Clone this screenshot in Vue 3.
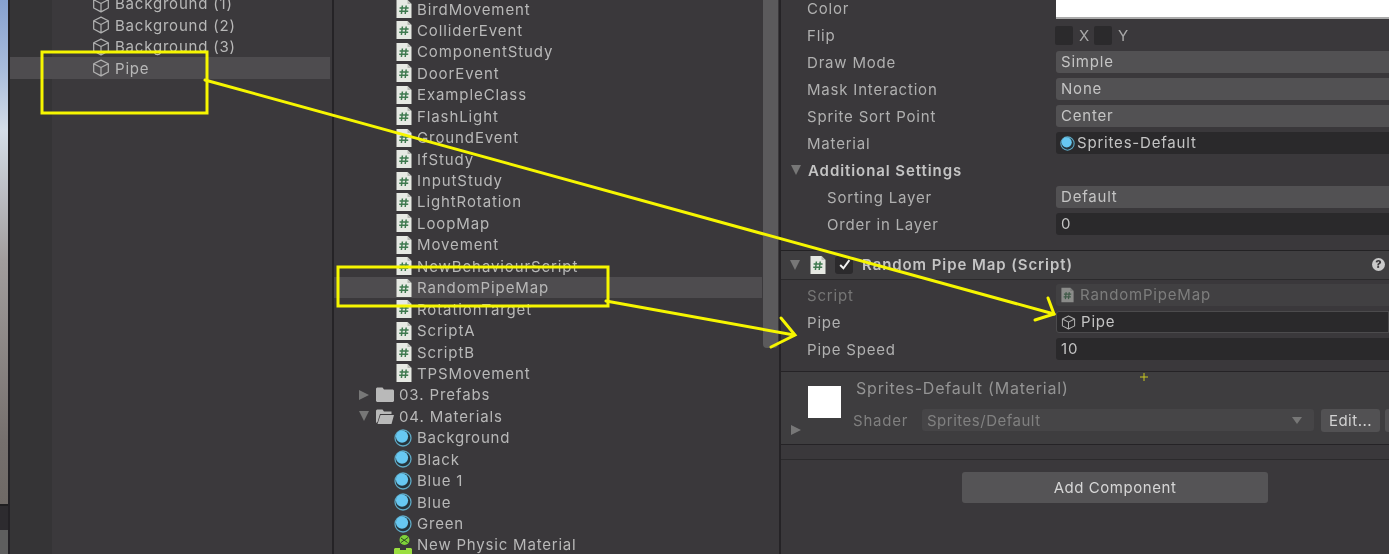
<script setup>
const hierarchy = ['Background (1)', 'Background (2)', 'Background (3)', 'Pipe']
const project = [
  ...['BirdMovement','ColliderEvent','ComponentStudy','DoorEvent','ExampleClass','FlashLight','GroundEvent','IfStudy','InputStudy','LightRotation','LoopMap','Movement','NewBehaviourScript','RandomPipeMap','RotationTarget','ScriptA','ScriptB','TPSMovement'].map(name => ({ name, kind: 'script' })),
  { name: '03. Prefabs', kind: 'closed' },
  { name: '04. Materials', kind: 'open' },
  ...['Background','Black','Blue 1','Blue','Green'].map(name => ({ name, kind: 'mat' })),
  { name: 'New Physic Material', kind: 'physic' }
]
const topRows = [
  { label: 'Draw Mode', value: 'Simple' },
  { label: 'Mask Interaction', value: 'None' },
  { label: 'Sprite Sort Point', value: 'Center' }
]
</script>

<template>
  <div class="app">
    <svg class="defs" width="0" height="0" aria-hidden="true">
      <symbol id="cube" viewBox="0 0 16 16">
        <path d="M8 1 14.5 4.2V11.6L8 15 1.5 11.6V4.2ZM1.5 4.2 8 7.6 14.5 4.2M8 7.6V15" fill="none" stroke="#b0b0b0" stroke-width="1.1" stroke-linejoin="round"/>
      </symbol>
      <symbol id="script" viewBox="0 0 16 18">
        <path d="M.5 0H11.5L15.5 4V18H.5Z" fill="#e6e9e3"/>
        <path d="M11.5 0 15.5 4H11.5Z" fill="#b9bcb6"/>
        <path d="M6.4 5.5 5.4 14M10.2 5.5 9.2 14M3.6 8H12.6M3.2 11.2H12.2" fill="none" stroke="#3f7a50" stroke-width="1.5"/>
      </symbol>
      <symbol id="material" viewBox="0 0 18 18">
        <circle cx="9" cy="9" r="8" fill="#26343b" stroke="#5fa9c4" stroke-width="1.3"/>
        <circle cx="8" cy="7.6" r="6.1" fill="#67c8f2"/>
      </symbol>
    </svg>

    <aside class="scene">
      <div class="scene-sky"></div>
      <div class="scene-bar"></div>
      <div class="scene-foot"></div>
    </aside>

    <section class="hierarchy">
      <div class="h-list">
        <div v-for="item in hierarchy" :key="item" class="row h-row" :class="{ selected: item === 'Pipe' }">
          <svg class="i-cube"><use href="#cube"/></svg>
          <span>{{ item }}</span>
        </div>
      </div>
    </section>

    <section class="project">
      <div class="p-list">
        <div v-for="item in project" :key="item.name" class="row p-row" :class="['k-' + item.kind, { selected: item.name === 'RandomPipeMap' }]">
          <template v-if="item.kind === 'closed' || item.kind === 'open'">
            <i class="fold" :class="item.kind === 'open' ? 'tri-down' : 'tri-right'"></i>
            <svg class="i-folder" viewBox="0 0 18 15">
              <path v-if="item.kind === 'closed'" d="M0 1.5 1 .5H6.5L8 2.5H17L18 3.5V14L17 15H1L0 14Z" fill="#b9b9b9"/>
              <path v-else d="M0 1.5 1 .5H6.5L8 2.5H15.5V5H4L1.5 13 0 14ZM4.5 6H18L15.5 15H1.5Z" fill="#b9b9b9"/>
            </svg>
          </template>
          <svg v-else-if="item.kind === 'script'" class="i-script"><use href="#script"/></svg>
          <svg v-else-if="item.kind === 'mat'" class="i-material"><use href="#material"/></svg>
          <svg v-else class="i-physic" viewBox="0 0 18 20">
            <circle cx="10.5" cy="5" r="5" fill="#7ed23a"/>
            <path d="M7 7.5 14 2.5M7 3 13.5 7.5" stroke="#2f4a22" stroke-width="1"/>
            <path d="M1 13H6V15H12V13H17L18 14V20H0V14Z" fill="#9ade3f"/>
          </svg>
          <span>{{ item.name }}</span>
        </div>
      </div>
      <div class="track"><div class="thumb"></div></div>
    </section>

    <section class="inspector">
      <div class="rows first">
        <div class="prop"><label>Color</label><div class="field color"></div></div>
        <div class="prop">
          <label>Flip</label>
          <div class="flips"><i class="box"></i><span>X</span><i class="box"></i><span>Y</span></div>
        </div>
        <div v-for="r in topRows" :key="r.label" class="prop">
          <label>{{ r.label }}</label><div class="field popup">{{ r.value }}</div>
        </div>
        <div class="prop">
          <label>Material</label>
          <div class="field dark object"><svg class="i-small-mat"><use href="#material"/></svg>Sprites-Default</div>
        </div>
        <div class="prop foldout"><i class="tri-down"></i><strong>Additional Settings</strong></div>
        <div class="prop sub"><label>Sorting Layer</label><div class="field popup">Default</div></div>
        <div class="prop sub"><label>Order in Layer</label><div class="field dark">0</div></div>
      </div>

      <header class="comp-head">
        <i class="tri-down"></i>
        <svg class="i-script"><use href="#script"/></svg>
        <span class="check">
          <svg viewBox="0 0 12 12"><path d="M2 6.5 5 9.5 10.5 2" fill="none" stroke="#f2f2f2" stroke-width="1.8"/></svg>
        </span>
        <strong>Random Pipe Map (Script)</strong>
        <b class="help">?</b>
      </header>

      <div class="rows comp-body">
        <div class="prop disabled">
          <label>Script</label>
          <div class="field muted object"><svg class="i-field-script"><use href="#script"/></svg>RandomPipeMap</div>
        </div>
        <div class="prop">
          <label>Pipe</label>
          <div class="field dark object ring"><svg class="i-field-cube"><use href="#cube"/></svg>Pipe</div>
        </div>
        <div class="prop"><label>Pipe Speed</label><div class="field dark">10</div></div>
      </div>

      <div class="material">
        <i class="tri-right mat-fold"></i>
        <div class="swatch"></div>
        <div class="mat-main">
          <div class="mat-title">Sprites-Default (Material)</div>
          <div class="shader">
            <span class="shader-label">Shader</span>
            <div class="shader-select">Sprites/Default<i class="tri-down"></i></div>
            <div class="edit">Edit...</div>
            <div class="edit-next"></div>
          </div>
        </div>
      </div>

      <div class="add-wrap"><div class="add">Add Component</div></div>
    </section>

    <svg class="marks" viewBox="0 0 1389 554" width="1389" height="554">
      <g fill="none" stroke="#f6f600" stroke-width="3" stroke-linejoin="miter" stroke-linecap="round">
        <rect x="42" y="52" width="165" height="61"/>
        <rect x="338" y="267" width="270" height="39"/>
        <path d="M205 80 1054 314"/>
        <path d="M1048 298 1054 314 1035 320"/>
        <path d="M606 301 794 335"/>
        <path d="M781 318 795 335 771 347"/>
      </g>
      <path d="M1140 377H1148M1144 373V381" stroke="#c9c920" stroke-width="1"/>
    </svg>
  </div>
</template>

<style scoped>
.app {
  position: relative;
  display: flex;
  width: 1389px;
  height: 554px;
  overflow: hidden;
  background: #3a383b;
  color: #b8b8b8;
  font-family: Inter, "Liberation Sans", sans-serif;
  font-size: 15px;
  letter-spacing: .8px;
}
.defs { position: absolute; }
i { display: block; flex: none; }
section { filter: blur(.5px); }

.tri-down { width: 0; height: 0; border-left: 5.5px solid transparent; border-right: 5.5px solid transparent; border-top: 10px solid #777; }
.tri-right { width: 0; height: 0; border-top: 5.5px solid transparent; border-bottom: 5.5px solid transparent; border-left: 10px solid #777; }

.scene { flex: 0 0 10px; display: flex; flex-direction: column; border-right: 2px solid #232125; width: 8px; box-sizing: border-box; }
.scene-sky { height: 504px; background: linear-gradient(180deg, #86a0cf 0, #a9bcdc 70px, #d4dce8 130px, #a29d9d 260px, #76706e 440px, #6f6966 504px); }
.scene-bar { height: 26px; background: #2d2b2f; border-top: 2px solid #1f1e20; box-sizing: border-box; }
.scene-foot { flex: 1; background: #5e5e5e; }

.row { display: flex; align-items: center; height: 21.45px; white-space: nowrap; }
.selected { background: #4e4c4f; }

.hierarchy {
  flex: 0 0 324px;
  box-sizing: border-box;
  background: linear-gradient(90deg, #353436 0, #353436 42px, #3b393c 42px);
  border-right: 2px solid #252326;
}
.h-list { margin-top: -7px; }
.h-row { padding-left: 82px; margin-right: 2px; }
.h-row.selected { height: 22px; }
.i-cube { width: 18px; height: 18px; margin-right: 5px; flex: none; }

.project { flex: 0 0 447px; box-sizing: border-box; display: flex; border-right: 2px solid #252326; }
.p-list { flex: 0 0 428px; margin-top: -1.7px; letter-spacing: .9px; }
.p-row { padding-left: 62px; }
.k-closed, .k-open { padding-left: 25px; }
.k-mat, .k-physic { padding-left: 60px; letter-spacing: .8px; }
.i-script { width: 16px; height: 18px; flex: none; margin-right: 5px; }
.i-material { width: 18px; height: 18px; flex: none; margin-right: 5px; }
.i-physic { width: 18px; height: 20px; flex: none; margin-right: 5px; }
.i-folder { width: 18px; height: 15px; flex: none; margin: 0 5px 0 7px; }
.track { flex: 0 0 15px; margin-left: 1px; }
.thumb { height: 348px; background: #5b5a5c; border-radius: 0 0 4px 4px; }

.inspector { flex: 1; min-width: 0; }
.rows.first { margin-top: -5.5px; }
.prop { display: grid; grid-template-columns: 249px 1fr; align-items: center; height: 27px; padding-left: 26px; }
.prop label { color: #b0b0b0; }
.prop.sub { padding-left: 46px; grid-template-columns: 229px 1fr; }
.field { height: 22.5px; line-height: 22.5px; padding-left: 5px; border-radius: 3px 0 0 3px; white-space: nowrap; color: #c4c4c4; box-sizing: border-box; }
.popup { background: #525153; }
.dark { background: #2a292b; }
.muted { background: #414042; color: #7d7d7d; }
.object { display: flex; align-items: center; }
.color { background: #fff; height: 22.5px; border-bottom: 2px solid #aaa; border-radius: 0; }
.flips { display: flex; align-items: center; color: #a8a8a8; margin-left: -1px; }
.box { width: 18px; height: 19px; background: #2b2a2c; border-radius: 2px; margin-right: 6px; }
.flips span { width: 15px; }
.i-small-mat { width: 15px; height: 15px; margin-right: 2px; flex: none; margin-left: -1px; }
.i-field-script { width: 13px; height: 16px; margin-right: 6px; opacity: .45; flex: none; }
.i-field-cube { width: 15px; height: 15px; margin-right: 5px; flex: none; }
.ring { box-shadow: inset 0 0 0 1px #4c4b4d; }
.foldout { display: flex; padding-left: 10px; gap: 7px; }
.foldout strong, .comp-head strong { color: #c4c4c4; font-weight: 600; letter-spacing: .92px; }
.disabled label { color: #767676; }

.comp-head {
  display: flex;
  align-items: center;
  height: 30px;
  margin-top: 12px;
  padding-left: 9px;
  background: #3f3e40;
  border-top: 1px solid #232224;
  border-bottom: 1px solid #2b2a2c;
  box-sizing: border-box;
}
.comp-head .i-script { margin: 0 9px 0 10px; }
.check { width: 18px; height: 18px; background: #2b2a2c; border-radius: 3px; display: flex; align-items: center; justify-content: center; margin-right: 9px; }
.check svg { width: 13px; height: 13px; }
.help { margin-left: auto; margin-right: 4px; width: 13px; height: 13px; border-radius: 50%; background: #c9c9c9; color: #3a383b; font-size: 11px; line-height: 13px; text-align: center; letter-spacing: 0; font-weight: 800; }
.comp-body { padding-top: 2px; }

.material {
  display: flex;
  height: 74px;
  margin-top: 8px;
  padding-left: 10px;
  background: #3e3d3f;
  border-top: 1px solid #252326;
  border-bottom: 1px solid #252326;
  box-sizing: border-box;
}
.mat-fold { align-self: flex-end; margin-bottom: 9px; margin-right: 7px; }
.swatch { flex: none; width: 33px; height: 32px; background: #fff; margin: 14px 12px 0 0; }
.mat-main { flex: 1; min-width: 0; }
.mat-title { color: #949494; font-size: 16px; margin: 6px 0 0 3px; line-height: 20px; height: 31px; }
.shader { display: flex; align-items: center; height: 23px; }
.shader-label { color: #7f7f7f; width: 69px; flex: none; }
.shader-select { flex: none; display: flex; align-items: center; justify-content: space-between; width: 392px; height: 22px; padding: 0 12px 0 5px; background: #464547; color: #808080; border-radius: 3px; box-sizing: border-box; letter-spacing: .5px; }
.shader-select .tri-down { border-left-width: 5px; border-right-width: 5px; border-top-width: 7px; }
.edit { flex: none; margin-left: 7px; width: 59px; height: 23px; line-height: 23px; text-align: center; background: #525153; color: #d2d2d2; border-radius: 3px; letter-spacing: .5px; }
.edit-next { flex: none; width: 6px; height: 23px; margin-left: 5px; background: #525153; border-radius: 3px 0 0 3px; }

.add-wrap { margin-top: 14px; border-top: 1px solid #2b2a2c; padding: 12px 0 0 181px; }
.add { width: 306px; height: 31px; line-height: 31px; text-align: center; background: #555456; color: #d6d6d6; border-radius: 3px; letter-spacing: .55px; }

.marks { position: absolute; left: 0; top: 0; pointer-events: none; }
</style>

<style>
html, body { background: #3a383b; overflow: hidden; }
</style>
